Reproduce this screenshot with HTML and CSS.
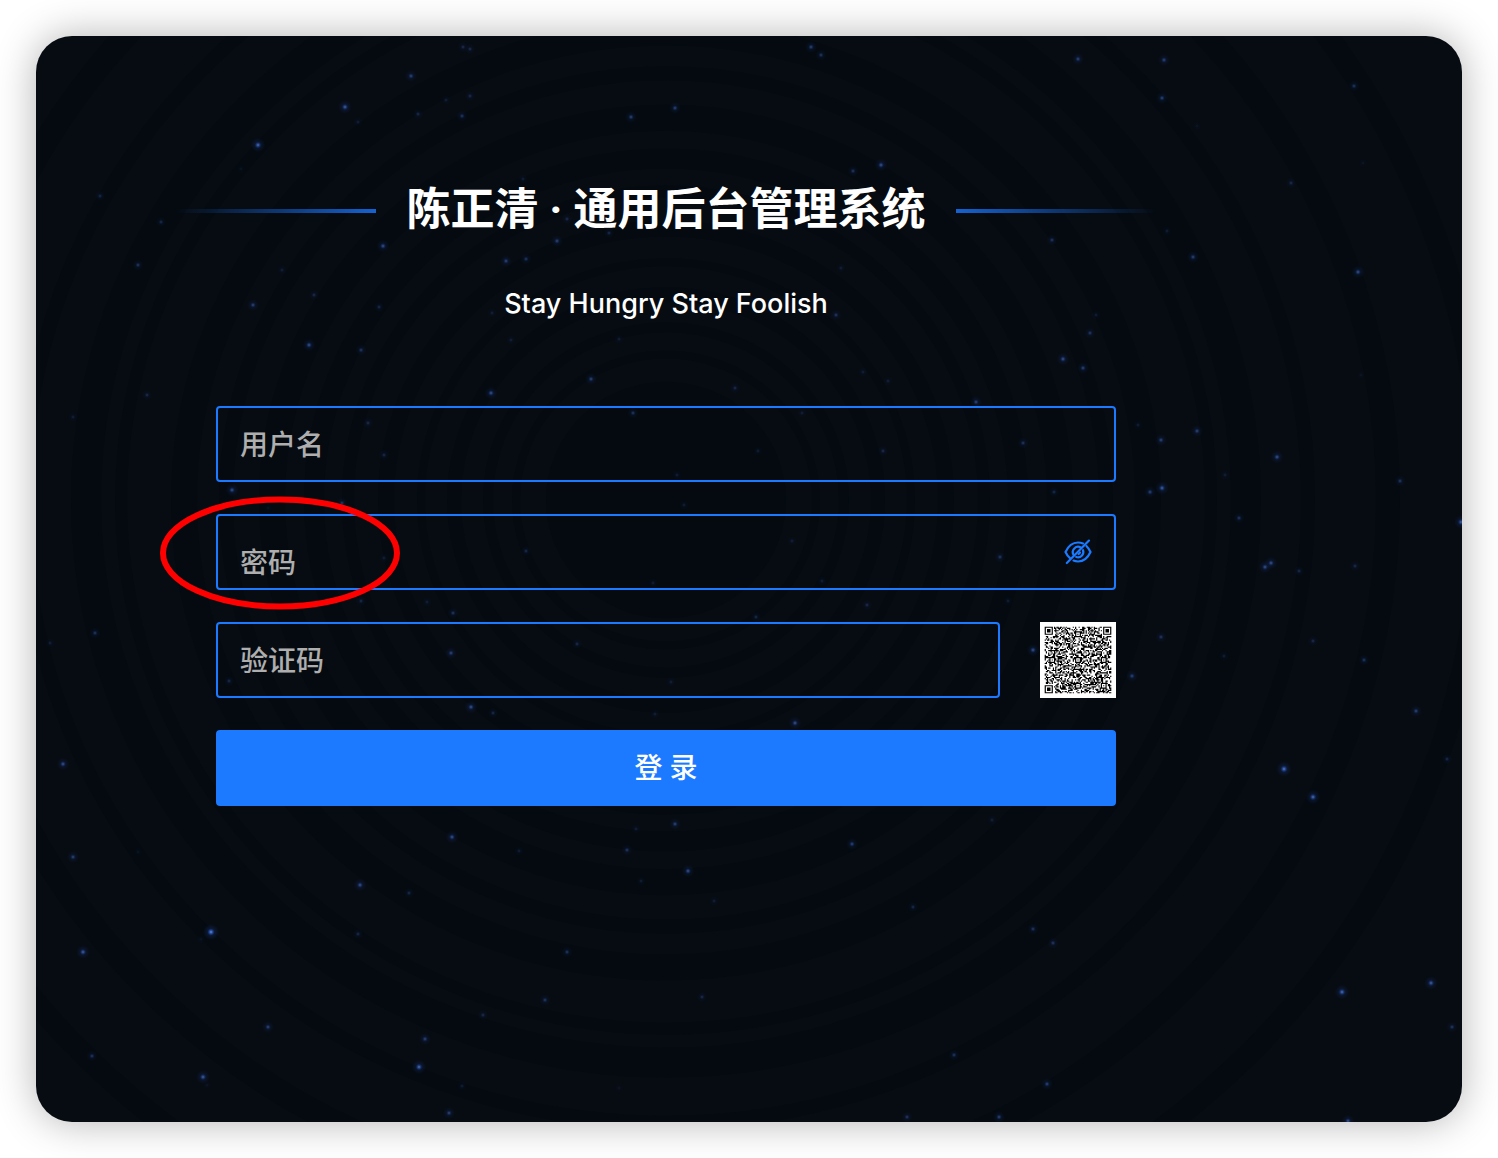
FILE: index.html
```html
<!DOCTYPE html>
<html lang="zh-CN">
<head>
<meta charset="utf-8">
<meta name="viewport" content="width=device-width, initial-scale=1">
<title>陈正清 · 通用后台管理系统</title>
<link rel="stylesheet" href="styles.css">
</head>
<body>
<main class="window">
  <svg class="sky" viewBox="36 36 1426 1086" preserveAspectRatio="xMidYMid slice" aria-hidden="true">
    <defs>
      <radialGradient id="glow">
        <stop offset="0" stop-color="#7ea6f5"/>
        <stop offset="0.2" stop-color="#2c58bb"/>
        <stop offset="0.45" stop-color="#1c3f96" stop-opacity="0.3"/>
        <stop offset="1" stop-color="#1c3f96" stop-opacity="0"/>
      </radialGradient>
    </defs>
    <g id="rings" fill="none" stroke="#030a10"></g>
    <g id="stars" fill="url(#glow)"></g>
  </svg>
  <section class="login">
    <header class="heading">
      <span class="rule rule-left"></span>
      <h1 class="title">陈正清 · 通用后台管理系统</h1>
      <span class="rule rule-right"></span>
    </header>
    <p class="motto">Stay Hungry Stay Foolish</p>
    <form class="form">
      <input class="field" type="text" placeholder="用户名" aria-label="用户名">
      <div class="password">
        <input class="field field-password" type="password" placeholder="密码" aria-label="密码">
        <button class="toggle" type="button" aria-label="显示密码">
          <svg class="eye" viewBox="0 0 28 28" fill="none" stroke="currentColor" stroke-width="2.2" stroke-linecap="round">
            <path d="M19 5.400C17.500 4.800 15.900 4.500 14 4.500C8 4.500 4 8.500 1.500 14C2.600 16.400 4.200 18.700 6 20.200M9.500 22.600C10.900 23.200 12.400 23.500 14 23.500C20 23.500 24 19.500 26.500 14C25.500 11.800 24.100 9.700 22.400 8"/>
            <path d="M17 9.700A5.300 5.300 0 0 0 9.800 17.200M12.200 19A5.300 5.300 0 0 0 19 12.200"/>
            <path d="M14.500 16A2.200 2.200 0 0 0 16 14.500"/>
            <path d="M2.800 25L25 2.600"/>
          </svg>
        </button>
        <svg class="mark" viewBox="0 0 240 114" aria-hidden="true"><ellipse cx="120" cy="57" rx="117" ry="53.500" fill="none" stroke="#ff0000" stroke-width="6"/></svg>
      </div>
      <div class="captcha">
        <input class="field" type="text" placeholder="验证码" aria-label="验证码">
        <svg class="qr" viewBox="-4 -4 65 65" role="img" aria-label="二维码"><path id="modules" fill="#000"/></svg>
      </div>
      <button class="submit" type="submit">登 录</button>
    </form>
  </section>
</main>
<script src="main.js"></script>
</body>
</html>
```
FILE: styles.css
```css
* {
  box-sizing: border-box;
}

body {
  margin: 0;
  min-height: 100vh;
  padding: 36px;
  display: flex;
  background: #fff;
  font-family: Roboto, "Noto Sans CJK SC", sans-serif;
}

.window {
  position: relative;
  flex: 1;
  overflow: hidden;
  border-radius: 36px;
  background: #070c13;
  box-shadow: 0 0 40px rgba(0, 0, 0, 0.3);
  padding: 140px 166px 140px 0;
  display: flex;
  justify-content: center;
  align-items: flex-start;
}

.sky {
  position: absolute;
  inset: 0;
  width: 100%;
  height: 100%;
}

.login {
  position: relative;
  flex: 0 1 980px;
  display: flex;
  flex-direction: column;
  align-items: center;
}

.heading {
  width: 100%;
  display: flex;
  align-items: center;
  justify-content: space-between;
}

.rule {
  flex: 0 1 200px;
  height: 4px;
}

.rule-left {
  background: linear-gradient(to left, #1662d2, transparent);
}

.rule-right {
  background: linear-gradient(to right, #1662d2, transparent);
}

.title {
  margin: 0;
  padding-bottom: 2px;
  color: #fff;
  font-size: 44px;
  line-height: 68px;
  font-weight: 700;
  white-space: nowrap;
}

.motto {
  margin: 36px 0 0;
  color: #fff;
  font-family: Inter, sans-serif;
  font-size: 27px;
  font-weight: 500;
  line-height: 44px;
}

.form {
  width: 100%;
  max-width: 900px;
  margin-top: 80px;
  display: flex;
  flex-direction: column;
  gap: 32px;
}

.field {
  flex: 1;
  width: 100%;
  min-width: 0;
  min-height: 76px;
  padding: 2px 22px 0;
  border: 2px solid #1b7aff;
  border-radius: 4px;
  background: transparent;
  color: #fff;
  font: inherit;
  font-size: 28px;
  outline: none;
}

.field::placeholder {
  color: #aeaeae;
  opacity: 1;
  font-weight: 500;
}

.password {
  position: relative;
  display: flex;
}

.field-password {
  padding-top: 22px;
  padding-right: 72px;
}

.toggle {
  position: absolute;
  top: 0;
  right: 24px;
  height: 100%;
  padding: 0;
  border: 0;
  background: none;
  color: #1b7aff;
  display: flex;
  align-items: center;
  cursor: pointer;
}

.eye {
  width: 28px;
  height: 28px;
}

.mark {
  position: absolute;
  left: -56px;
  top: -18px;
  width: 240px;
  height: 114px;
  pointer-events: none;
}

.captcha {
  display: flex;
  gap: 40px;
}

.qr {
  flex: none;
  width: 76px;
  height: 76px;
  background: #fff;
}

.submit {
  height: 76px;
  padding: 0 0 4px;
  border: 0;
  border-radius: 4px;
  background: #1b7aff;
  color: #fff;
  font: inherit;
  font-size: 28px;
  font-weight: 500;
  cursor: pointer;
}
```
FILE: main.js
```js
const NS = "http://www.w3.org/2000/svg";

function add(parent, name, attrs) {
  const el = document.createElementNS(NS, name);
  for (const key in attrs) el.setAttribute(key, attrs[key]);
  parent.appendChild(el);
}

// Each star: x, y, brightness from 1 to 10
const stars = [
  [463,47,3],[470,49,3],[411,76,5],[345,107,7],[358,122,2],[258,145,8],[241,169,1],[446,100,2],[470,96,3],[418,114,3],[462,116,4],
  [100,196,3],[161,222,3],[138,265,4],[383,246,6],[282,270,2],[314,295,3],[253,305,5],[379,307,3],[309,345,6],[361,350,4],[492,313,2],
  [811,47,5],[821,55,4],[675,108,5],[631,117,5],[881,165,6],[853,171,4],[557,241,5],[506,261,5],[526,259,4],[567,219,3],[609,233,3],
  [836,315,4],[841,268,2],[523,179,2],[1078,59,5],[1164,60,5],[1162,98,5],[1354,86,4],[1197,126,1],[1291,183,3],[1363,163,1],
  [1052,240,4],[1167,231,2],[1193,257,5],[1358,272,6],[1096,315,2],[1090,333,4],[1063,359,6],[1083,368,5],[1361,375,1],
  [491,393,6],[591,379,5],[633,413,4],[735,388,3],[863,372,2],[888,381,2],[976,402,5],[511,340,2],[619,339,2],[147,395,3],[73,417,2],
  [368,423,3],[384,455,3],[802,413,2],[758,451,2],[883,451,3],[1023,443,4],[1138,425,2],[1161,440,5],[1197,431,5],[1277,457,6],
  [1225,475,2],[1400,481,4],[1150,492,5],[1162,488,7],[1239,518,4],[1461,522,7],[232,490,6],[342,503,4],[268,508,1],[677,475,2],
  [684,505,2],[526,551,3],[792,541,2],[1000,557,4],[1265,567,6],[1271,563,6],[1299,571,3],[1355,566,3],[1054,492,3],
  [384,558,2],[361,601,3],[653,583,2],[822,581,2],[427,602,2],[453,613,4],[867,605,3],[756,617,3],[1008,601,2],
  [50,643,2],[95,633,4],[229,681,3],[451,653,5],[577,644,3],[671,682,2],[471,707,6],[493,713,3],[655,714,2],[795,723,6],
  [1033,650,6],[1161,637,4],[1132,676,5],[1224,656,2],[1313,641,3],[1364,660,4],[1416,711,5],[1447,759,3],
  [63,764,6],[73,857,5],[138,852,1],[452,837,6],[360,885,6],[409,893,3],[211,932,10],[201,939,1],[83,952,7],[358,934,3],
  [675,824,5],[627,850,4],[688,871,6],[852,844,5],[519,851,2],[636,829,2],[641,881,2],[714,901,2],[913,907,3],[992,820,2],
  [567,952,4],[545,1000,4],[483,1015,3],[702,997,3],[268,1027,5],[92,1056,4],[425,1039,5],[419,1067,8],[203,1077,7],[207,1085,1],
  [462,1086,2],[449,1113,5],[954,1055,4],[1047,1084,5],[1033,929,4],[1053,943,4],[907,1117,4],[999,1117,5],[619,1088,1],
  [1284,769,9],[1313,797,8],[1342,992,8],[1431,983,7],[1452,1027,4],[1348,1121,6]
];

const sky = document.getElementById("stars");
for (const [x, y, level] of stars) {
  add(sky, "circle", { cx: x, cy: y, r: 4 + level * 0.4, opacity: level / 12 });
}

// Faint orbit rings behind the form
const rings = document.getElementById("rings");
for (const [r, w] of [[60,120],[150,8],[178,10],[212,14],[245,8],[280,16],[318,12],[352,20],[394,26],[440,14],[482,26],[545,12],[580,30],[642,14],[722,24],[816,22]]) {
  add(rings, "ellipse", { cx: 666, cy: 500, rx: r, ry: r * 0.97, "stroke-width": w, opacity: 0.7 });
}

// QR modules: finder and alignment patterns, then data
const size = 57;
let seed = 20231;
function bit() {
  seed = (seed * 1103515245 + 12345) % 2147483648;
  return (seed >> 16) & 1;
}
function pattern(x, y, cx, cy, reach) {
  const d = Math.max(Math.abs(x - cx), Math.abs(y - cy));
  if (d > reach) return null;
  if (reach === 4) return d !== 4 && d !== 2;
  return d !== 1;
}
let d = "";
for (let y = 0; y < size; y++) {
  for (let x = 0; x < size; x++) {
    let on = null;
    for (const [cx, cy] of [[3, 3], [53, 3], [3, 53]]) on = on ?? pattern(x, y, cx, cy, 4);
    for (const [cx, cy] of [[28, 6], [6, 28], [28, 28], [50, 28], [28, 50], [50, 50]]) on = on ?? pattern(x, y, cx, cy, 2);
    if (on ?? bit()) d += `M${x} ${y}h1v1h-1z`;
  }
}
document.getElementById("modules").setAttribute("d", d);
```
